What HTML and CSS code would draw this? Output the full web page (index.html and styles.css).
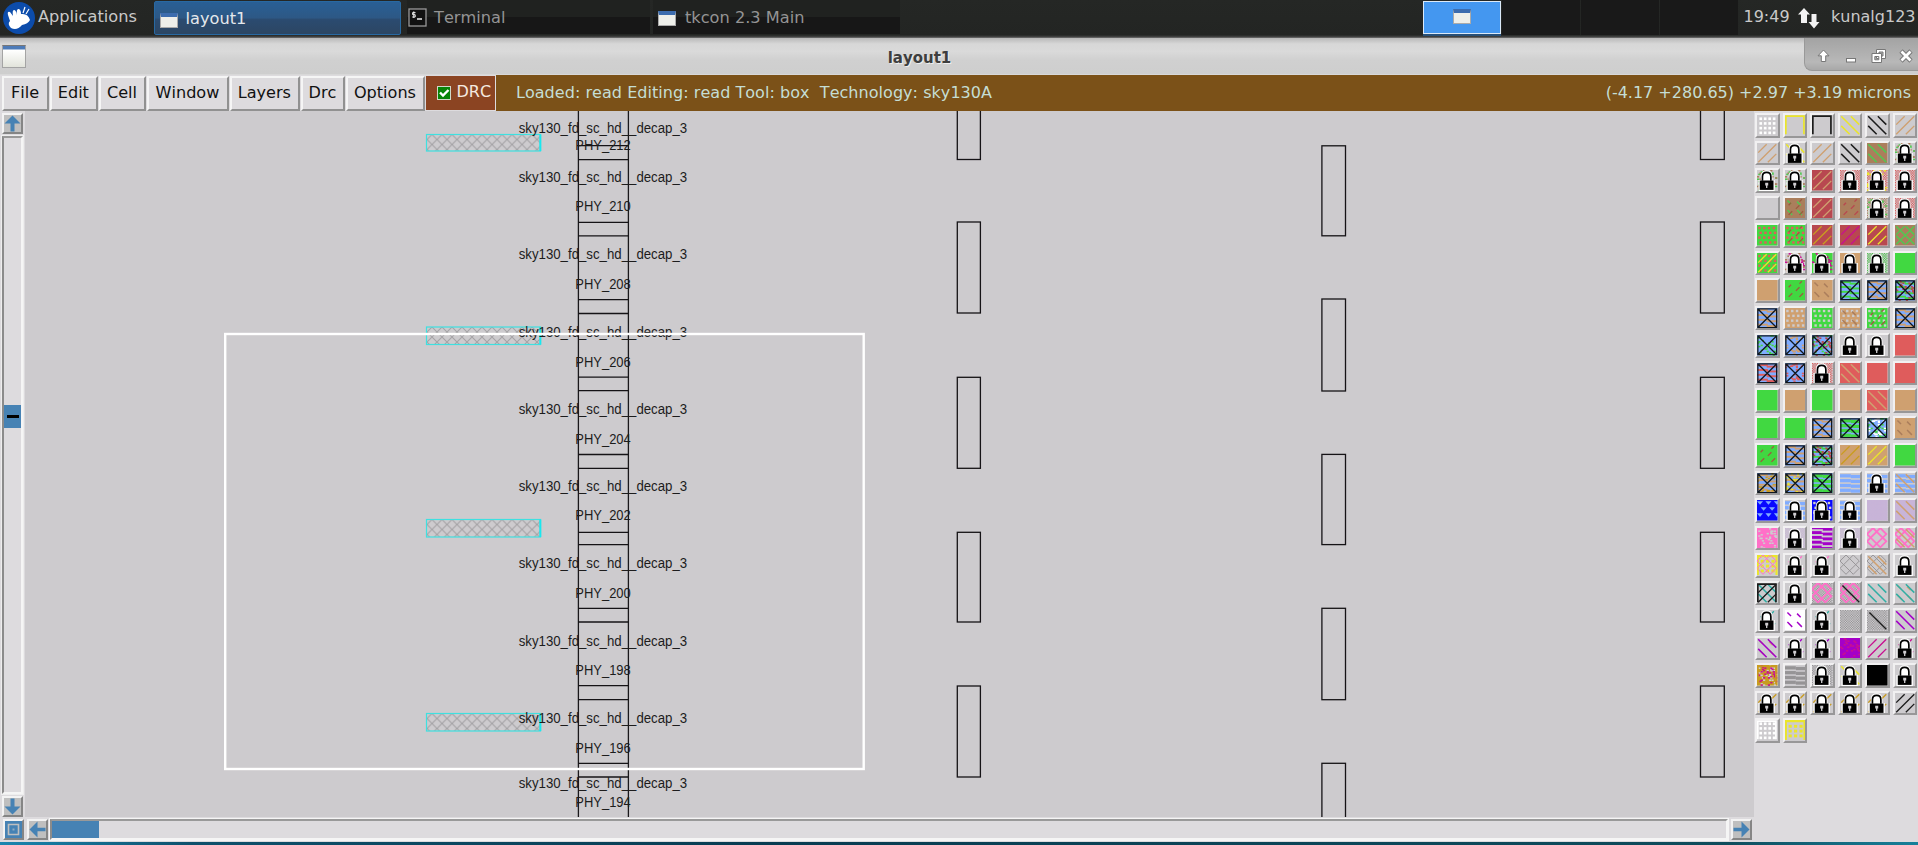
FILE: index.html
```html
<!DOCTYPE html>
<html lang="en">
<head>
<meta charset="utf-8">
<title>layout1</title>
<link rel="stylesheet" href="styles.css">
</head>
<body>
<div class="desktop">
  <header class="panel">
    <div class="apps">
      <svg class="apps-logo" width="34" height="34" viewBox="0 0 34 34"><circle cx="17" cy="17" r="16" fill="#0c4cab"/><path d="M6 14 Q5 10 8 11 L11 15 Q10 9 12 9 Q14 9 15 14 Q14 7 17 8 Q19 9 19 13 Q26 12 28 19 Q26 23 20 24 Q15 30 9 27 Q5 23 8 20Z" fill="#fff"/><path d="M21 12 L23 6 M24 13 L27 8" stroke="#fff" stroke-width="1.2"/></svg>
      <span>Applications</span>
    </div>
    <div class="task active"><i class="win-icon"></i><span>layout1</span></div>
    <div class="task terminal"><svg width="19" height="19" viewBox="0 0 19 19"><rect x="1" y="1" width="17" height="17" fill="#111" stroke="#999" stroke-width="1.3"/><path d="M7.5 4.6H4.6V6.7H7.2V9H4.2M5.8 3.4V10" fill="none" stroke="#eee" stroke-width="1"/><path d="M9 11H14" stroke="#eee" stroke-width="1.5"/></svg><span>Terminal</span></div>
    <div class="task console"><i class="win-icon"></i><span>tkcon 2.3 Main</span></div>
    <div class="pager">
      <div class="desk current"><i class="win-icon"></i></div><div class="desk"></div><div class="desk"></div><div class="desk"></div>
    </div>
    <span class="clock">19:49</span>
    <svg class="net" width="22" height="22" viewBox="0 0 22 22"><path d="M0 6.5 6 0 12 6.5H9V15H3V6.5ZM10.500 14H13.500V6H18.500V14H21.500L16 20.500Z" fill="#f2f2f2"/></svg>
    <span class="user">kunalg123</span>
  </header>

  <div class="titlebar">
    <i class="title-icon"></i>
    <b>layout1</b>
    <div class="controls">
      <svg width="113" height="33" viewBox="0 0 113 33"><g fill="#fff" stroke="#777" stroke-width="1"><path d="M18.500 12 24 17.800H20.700V23.500H16.300V17.800H13Z"/><rect x="41.500" y="20.500" width="9" height="3.500"/><path d="M71.500 11.500H80.500V20.500H71.500Z M74 14V18H78V14Z" fill-rule="evenodd"/><path d="M67 15.500H76.500V24.500H67Z M69.800 18.500V21.800H73.800V18.500Z" fill-rule="evenodd"/></g><path d="M96 13 106 23M106 13 96 23" stroke="#777" stroke-width="4.600"/><path d="M96.500 13.500 105.500 22.500M105.500 13.500 96.500 22.500" stroke="#fff" stroke-width="2.800"/></svg>
    </div>
  </div>

  <nav class="menubar">
    <div class="menu file">File</div><div class="menu edit">Edit</div><div class="menu cell-menu">Cell</div><div class="menu window">Window</div><div class="menu layers">Layers</div><div class="menu drc">Drc</div><div class="menu options">Options</div>
    <div class="drc-toggle"><svg width="14" height="14" viewBox="0 0 14 14"><rect x=".5" y=".5" width="13" height="13" fill="#078407" stroke="#cfd8c8"/><path d="M3 6.500 6 9.500 11.500 4" fill="none" stroke="#fff" stroke-width="2.400"/></svg><span>DRC</span></div>
    <div class="status"><span class="loaded">Loaded: read Editing: read Tool: box&nbsp; Technology: sky130A</span><span class="coords">(-4.17 +280.65) +2.97 +3.19 microns</span></div>
  </nav>

  <main class="workspace">
    <div class="vscroll">
      <div class="arrow"><svg width="17" height="17" viewBox="0 0 17 17"><path d="M8.500 .5 16.500 8.500H10.500V16.500H6.500V8.500H.5Z" fill="#4682b4"/></svg></div>
      <div class="vtrack"><div class="vthumb"></div></div>
      <div class="arrow"><svg width="17" height="17" viewBox="0 0 17 17"><path d="M8.500 16.500 .5 8.500H6.500V.5H10.500V8.500H16.500Z" fill="#4682b4"/></svg></div>
    </div>
    <svg class="canvas" id="canvas" width="1729" height="706" viewBox="25 111 1729 706"></svg>
    <div class="hscroll">
      <div class="arrow corner"><svg width="17" height="17" viewBox="0 0 17 17"><path d="M0 0H17V17H0Z" fill="#4682b4"/><path d="M3.500 3.500H13.500V13.500H3.500Z" fill="none" stroke="#bfbfbf" stroke-width="1.600"/><path d="M7.500 7.500H9.500V9.500H7.500Z" fill="#8eabc2"/></svg></div>
      <div class="arrow"><svg width="17" height="17" viewBox="0 0 17 17"><path d="M.5 8.500 8.500 .5V6.700H16.500V10.300H8.500V16.500Z" fill="#4682b4"/></svg></div>
      <div class="htrack"><div class="hthumb"></div></div>
      <div class="arrow"><svg width="17" height="17" viewBox="0 0 17 17"><path d="M16.500 8.500 8.500 16.500V10.300H.5V6.700H8.500V.5Z" fill="#4682b4"/></svg></div>
    </div>
    <aside class="palette" id="palette"></aside>
  </main>
  <div class="wallpaper"></div>
</div>
<script src="app.js"></script>
</body>
</html>
```

FILE: styles.css
```css
* { box-sizing: border-box; }
body { margin: 0; overflow: hidden; font-family: "DejaVu Sans", sans-serif; font-size: 16px; font-kerning: none; background: #dddbde; }
.desktop { width: 1918px; height: 845px; display: flex; flex-direction: column; }
.panel { height: 38px; flex: none; display: flex; background: linear-gradient(#252725 0, #232523 92%, #444 97%, #777 100%); color: #c9c9c9; }
.apps { width: 153.500px; padding-left: 2px; display: flex; gap: 2px; line-height: 34px; font-size: 16.200px; }
.apps-logo { margin-top: 1px; flex: none; }
.task { height: 34px; display: flex; line-height: 35px; flex: none; font-size: 16.200px; background: linear-gradient(#202220 50%, #171717 51%); color: #949494; }
.task.active { width: 247.500px; margin-top: 1px; border: 1px solid #2869a2; background: linear-gradient(#295f95, #2d5885 49%, #2b4b70 55%, #2c4663); color: #e4e8ec; padding-left: 5px; gap: 8px; border-radius: 2px; line-height: 34px; }
.task.terminal { width: 243px; margin-left: 6px; padding-left: 1px; gap: 7px; }
.task.terminal svg { margin-top: 8px; }
.task.console { width: 247px; margin-left: 3px; padding-left: 5px; gap: 9px; }
.win-icon { width: 18px; height: 15px; margin-top: 11px; flex: none; border: 1px solid #aaa; border-top: 4px solid #3c6cae; background: #eeefea; }
.pager { display: flex; margin-left: auto; gap: 1px; }
.desk { width: 78px; height: 35px; background: #191919; display: flex; justify-content: center; }
.desk.current { width: 78px; height: 33px; background: #4497f0; border: 1px solid #dbe9f8; box-shadow: 0 2px #285078; margin-top: 1px; }
.desk.current .win-icon { margin-top: 7px; }
.clock { margin-left: 6px; width: 54.500px; line-height: 34px; }
.net { margin-top: 8px; flex: none; }
.user { margin-left: 11px; width: 87px; line-height: 34px; }
.titlebar { height: 37px; flex: none; position: relative; background: linear-gradient(#b8b8b8, #d7d7d7 16%, #dadada 36%, #d0d0d0 60%, #cecece 96%, #ddd); display: flex; justify-content: center; padding-right: 79px; }
.titlebar b { font-size: 15px; line-height: 40px; color: #3e3e3e; text-shadow: 1px 1px #eee; }
.title-icon { position: absolute; left: 2px; top: 7px; width: 24px; height: 23px; border: 1px solid #a4a4a4; border-top: 1px solid #777; background: linear-gradient(#4d7bb8 0, #4d7bb8 3px, #fff 4px, #e2e4db); }
.controls { position: absolute; right: 0; top: 0; height: 33px; background: linear-gradient(#a3a3a3, #b8b8b8 75%, #a8a8a8); border: 1px solid #999; border-width: 0 0 1px 1px; border-bottom-left-radius: 8px; }
.menubar { height: 36px; flex: none; display: flex; background: #dddbde; padding-left: 2px; gap: 1px; color: #111; }
.menu { height: 35px; margin-top: 1px; border: 2px solid; border-color: #f5f5f5 #919191 #919191 #f5f5f5; text-align: center; line-height: 30px; flex: none; font-size: 16.100px; text-indent: -1px; }
.menu.file { width: 47px; } .menu.edit { width: 47.700px; } .menu.cell-menu { width: 47.600px; } .menu.window { width: 81.400px; } .menu.layers { width: 70.300px; } .menu.drc { width: 44px; } .menu.options { width: 79px; }
.drc-toggle { width: 69px; height: 34px; margin-top: 1px; flex: none; background: #8b4422; color: #f5e9e0; display: flex; padding-left: 11px; line-height: 32px; gap: 5.500px; }
.drc-toggle svg { margin-top: 10px; flex: none; }
.status { flex: 1; display: flex; justify-content: space-between; background: #7b5118; color: #c5ded4; line-height: 35px; padding: 0 7px 0 20px; }
.loaded, .coords { white-space: pre; }
.loaded { letter-spacing: .045px; }
.workspace { height: 731px; flex: none; display: grid; grid-template: 706px 25px / 25px 1729px 164px; }
.vscroll { display: flex; flex-direction: column; align-items: center; gap: 2px; padding: 2px 2px 0 2px; }
.arrow { width: 21px; height: 21px; border: 2px solid; border-color: #f3f3f3 #858585 #858585 #f3f3f3; background: #bfbfbf; flex: none; line-height: 0; }
.vscroll .arrow { margin-left: 1px; margin-right: 1px; }
.vtrack { flex: 1; width: 21px; border: 2px solid; border-color: #999 #f5f5f5 #f5f5f5 #8b8b8b; background: #dddbde; padding-top: 267px; outline: 1px solid #eee; }
.vthumb { height: 23px; background: #4682b4; padding: 10px 2.500px; }
.vthumb::before { content: ""; display: block; height: 3px; background: #000; }
.canvas { background: #cdcbce; display: block; }
.hscroll { grid-column: 1 / 3; display: flex; gap: 3px; align-items: center; padding: 0 2px 0 2.500px; }
.htrack { flex: 1; height: 21px; margin-left: -1px; border: 2px solid; border-color: #999 #f5f5f5 #f5f5f5 #8b8b8b; outline: 1px solid #f5f5f5; background: #dddbde; }
.hthumb { width: 47px; height: 17px; background: #4682b4; }
.palette { grid-column: 3; grid-row: 1 / 3; padding: 2px 0 0 1px; display: grid; grid-template-columns: repeat(6, 24.500px); grid-auto-rows: 24.500px; gap: 3.030px; overflow: hidden; }
.layer { border: 2px solid; border-color: #f1f0f1 #989798 #989798 #f1f0f1; background: #cdcbce; line-height: 0; }
.layer svg { display: block; width: 20.500px; height: 20.500px; }
.label { font-family: "Liberation Sans", sans-serif; font-size: 14px; fill: #1c1c1c; }
.wallpaper { flex: 1; background: linear-gradient(90deg, #1a86b0, #0e506c 10%, #083c52 40%, #0e4c5c 90%, #17809a); }
```

FILE: app.js
```js
// ---- layout view ----
const canvas = document.getElementById('canvas');
const out = ['<defs><pattern id="hatch" width="10" height="10" patternUnits="userSpaceOnUse" x="427" y="5"><path d="M0 0 10 10M10 0 0 10" stroke="#a5a3a6" stroke-width="1.1"/></pattern></defs>'];
const box = (x1, y1, x2, y2) => out.push(`<rect x="${x1}" y="${y1}" width="${x2 - x1}" height="${y2 - y1}" fill="none" stroke="#151316" stroke-width="1.3"/>`);
[[134.5, 151], [327, 344.5], [519.5, 537], [713.5, 731]].forEach(([a, b]) => {
  out.push(`<g transform="translate(0 ${a})"><rect x="426.500" width="114" height="${b - a}" fill="url(#hatch)" stroke="#3fe0e0" stroke-width="1.200"/></g><path d="M540.300 ${a}V${b}" stroke="#18e8f0" stroke-width="2"/>`);
});
[[100, 159.5], [222, 313], [377.3, 468.3], [532.3, 622], [686, 777]].forEach(([a, b]) => { box(957.3, a, 980.4, b); box(1700.5, a, 1724.3, b); });
[[145.8, 235.8], [299, 391], [454.4, 544.6], [608.3, 699.7], [763.3, 850]].forEach(([a, b]) => box(1321.9, a, 1345.5, b));
out.push('<path d="M578.400 100V850M628.400 100V850" stroke="#1a181b" stroke-width="1.300"/>');
[145.7, 159.6, 222.3, 235.8, 299.7, 313.5, 377.2, 390.7, 454.5, 468.4, 532.3, 544.6, 608.4, 622, 685.7, 699.6, 763.4, 777].forEach(y => out.push(`<path d="M578 ${y}H628.500" stroke="#151316" stroke-width="1.300"/>`));
const cellY = [132.7, 181.7, 259, 336.7, 414.3, 490.7, 568.3, 645.7, 723, 787.7];
const instY = [150, 211.3, 289, 366.7, 443.7, 520.3, 598, 675.3, 752.7, 806.7];
cellY.forEach((y, i) => {
  out.push(`<text class="label" x="518.700" y="${y}" textLength="168.500" lengthAdjust="spacingAndGlyphs">sky130_fd_sc_hd__decap_3</text>`);
  out.push(`<text class="label" x="575.300" y="${instY[i]}" textLength="55.500" lengthAdjust="spacingAndGlyphs">PHY_${212 - 2 * i}</text>`);
});
out.push('<rect x="225.200" y="334" width="638.500" height="435" fill="none" stroke="#fff" stroke-width="2.400"/>');
canvas.innerHTML = out.join('');

// ---- layer palette ----
const C = { w: '#fff', y: '#eae52a', k: '#1c1c1c', t: '#cfa070', g: '#41d841', G: '#52c852', r: '#b84850', b: '#ab7e5c', c: '#df5c5c', m: '#c81090', p: '#a400c8', P: '#ff70c8', l: '#c8b4d8', B: '#80acff', U: '#0808ff', T: '#30aea4', o: '#c99c20', s: '#969496', n: '#cdcbce', X: '#000', d: '#9c5c40' };
const px = (x, y, w, h, c) => `<path d="M${x} ${y}h${w}v${h}h${-w}z" fill="${c}"/>`;
const ops = {
  f: c => px(0, 0, 17, 17, c),
  '/': c => `<path d="M1 8 8 1M1 16 16 1M9 16 16 9" stroke="${c}" stroke-width="1.100" fill="none"/>`,
  '\\': c => `<path d="M1 1 16 16M9 1 16 8M1 9 8 16" stroke="${c}" stroke-width="1.250" fill="none"/>`,
  1: c => `<path d="M2 2 16 16" stroke="${c}" stroke-width="1.200"/>`,
  '-': c => `<path d="M3 6 5 4M9 9 12 6M3 14 6 11M12 14 15 11M12 3 14 1" stroke="${c}" stroke-width="1.100"/>`,
  '+': c => `<path d="M2 2 5 5M10 3 13 6M2 10 6 14M10 10 14 14" stroke="${c}" stroke-width="1.200"/>`,
  o: c => { let s = ''; for (let y = 0; y < 4; y++) for (let x = 0; x < 4; x++) s += px(1 + x * 4 + (y % 2 ? 1 : 0), 1.5 + y * 4, 2, 2, c); return s; },
  O: c => { let s = ''; for (let y = 0; y < 4; y++) for (let x = 0; x < 4; x++) s += px(2 + x * 3.7, 2 + y * 3.9, 2.2, 2.2, c); return s; },
  F: c => `<path d="M.7 16V.9H15.700V16" fill="none" stroke="${c}" stroke-width="1.400"/>`,
  D: c => `<path d="M.7 16.500V1H16.200V16.500" fill="none" stroke="${c}" stroke-width="1.800"/>` + [4, 8, 12].map(y => [3, 7.5, 12].map(x => px(x, y, 2.6, 2.4, c)).join('')).join(''),
  z: c => { let s = ''; for (let y = 0; y < 17; y++) for (let x = y % 2; x < 17; x += 2) s += px(x, y, 1, 1, c); return s; },
  h: c => { let s = ''; for (let y = 0; y < 16; y += 4) s += px(0, y + 1, 9, 1.6, c) + px(8, y + 2.2, 9, 1.6, c); return s; },
  H: c => { let s = ''; for (let y = 0; y < 16; y += 4) s += px(0, y + 1, 9, 2.7, c) + px(9, y + 1.6, 8, 2.7, c); return s; },
  x: c => `<path d="M0 5 5 0 16 11 11 16 0 5M11 0 16 5 5 16 0 11 11 0" fill="none" stroke="${c}" stroke-width="1.500"/>`,
  X: c => `<path d="M0 5 5 0 16 11 11 16 0 5M11 0 16 5 5 16 0 11 11 0" fill="none" stroke="${c}" stroke-width=".8"/>`,
  v: c => { let s = ''; for (let y = 1; y < 15; y += 5) for (let x = y === 6 ? 3 : 0; x < 15; x += 7) s += `<path d="M${x} ${y}h5l-2.500 3z" fill="${c}"/>`; return s; },
  q: c => { let s = '', n = 7 + c.charCodeAt(2); for (let i = 0; i < 30; i++) { n = (n * 75 + 74) % 65537; s += px(n % 16, (n >> 5) % 17, 1.8, 1.3, c); } return s; },
  '#': () => '<path d="M.7 .7H16.300V16.300H.7Z M1 1 16 16M16 1 1 16" fill="none" stroke="#101820" stroke-width="1.100"/>',
  L: () => '<path d="M4 9V5Q4 1 8 1Q12 1 12 5V9H14V17H2V9Z" fill="#fff" stroke="#fff" stroke-width="1.600"/><path d="M4.500 9V5.500Q4.500 2 8 2Q11.500 2 11.500 5.500V9" fill="none" stroke="#000" stroke-width="1.400"/><path d="M2.300 8.700H13.700V16.500H2.300Z" fill="#000"/><path d="M6.800 10.500H9.300V12.800H8.600V15H7.500V12.800H6.800Z" fill="#cdcbce"/>'
};
// Each entry is a run of (operation, colour) pairs; L draws the lock, # the contact cross.
const rows = [
  'Ow Fy Fk \\y \\k /t', '/t \\yL_ /t \\k fb\\G qbqGL_', 'qGqbL_ qbqGL_ fr/t zcL_ zcqyL_ zcL_',
  'fn fb+G-d fr/t fb-r zbqGL_ zcL_', 'fgoc fgoc-d fr/o fr/m fr/y fb/G\\G', 'fgoc/y qmqbL_ fgqmL_ ftL_ zGL_ fg',
  'ft fg-d ft+b fBhg#_ fBht#_ fBhgqr#_', 'fBht#_ fton fgon fton+b fgon-d fBht#_', 'fBqg#_ fBqt#_ fBqgqr#_ L_ L_ fc',
  'fBhc#_ fBqc#_ zcL_ fc\\t fc fc', 'fg ft fg ft fc\\t ft', 'fg fg fBht#_ fBHg#_ fBqgqw#_ ft+b',
  'fg-d fBht#_ fBhgqr#_ ft/o ft/y fg', 'fBhtqo#_ fBhtqy#_ fBHg#_ HB HBL_ HB\\t', 'fUvB HBL_ fUonL_ HBL_ flzl fl\\t',
  'fPqn zlL_ fphn zlL_ xP xP\\t', 'DyXP -PL_ -PL_ Xs Xs\\t L_', '\\T/kFk L_ zsxP zsxP1k \\T +t\\T',
  '-TL_ fw+p -TL_ zs zs1k \\p', '+t\\p -pL_ -pL_ fpqm /m -mL_', 'foqnqmFo Hs zsL_ \\yL_ fX L_',
  '/oL_ /oL_ /oL_ /oL_ /oL_ /k', 'OwFw Dy'
];
document.getElementById('palette').innerHTML = rows.flatMap(r => r.split(' ')).map(code => {
  let s = '';
  for (let i = 0; i < code.length; i += 2) s += (ops[code[i]] || (() => ''))(C[code[i + 1]] || C.n);
  return `<div class="layer"><svg viewBox="0 0 17 17">${s}</svg></div>`;
}).join('');
```
